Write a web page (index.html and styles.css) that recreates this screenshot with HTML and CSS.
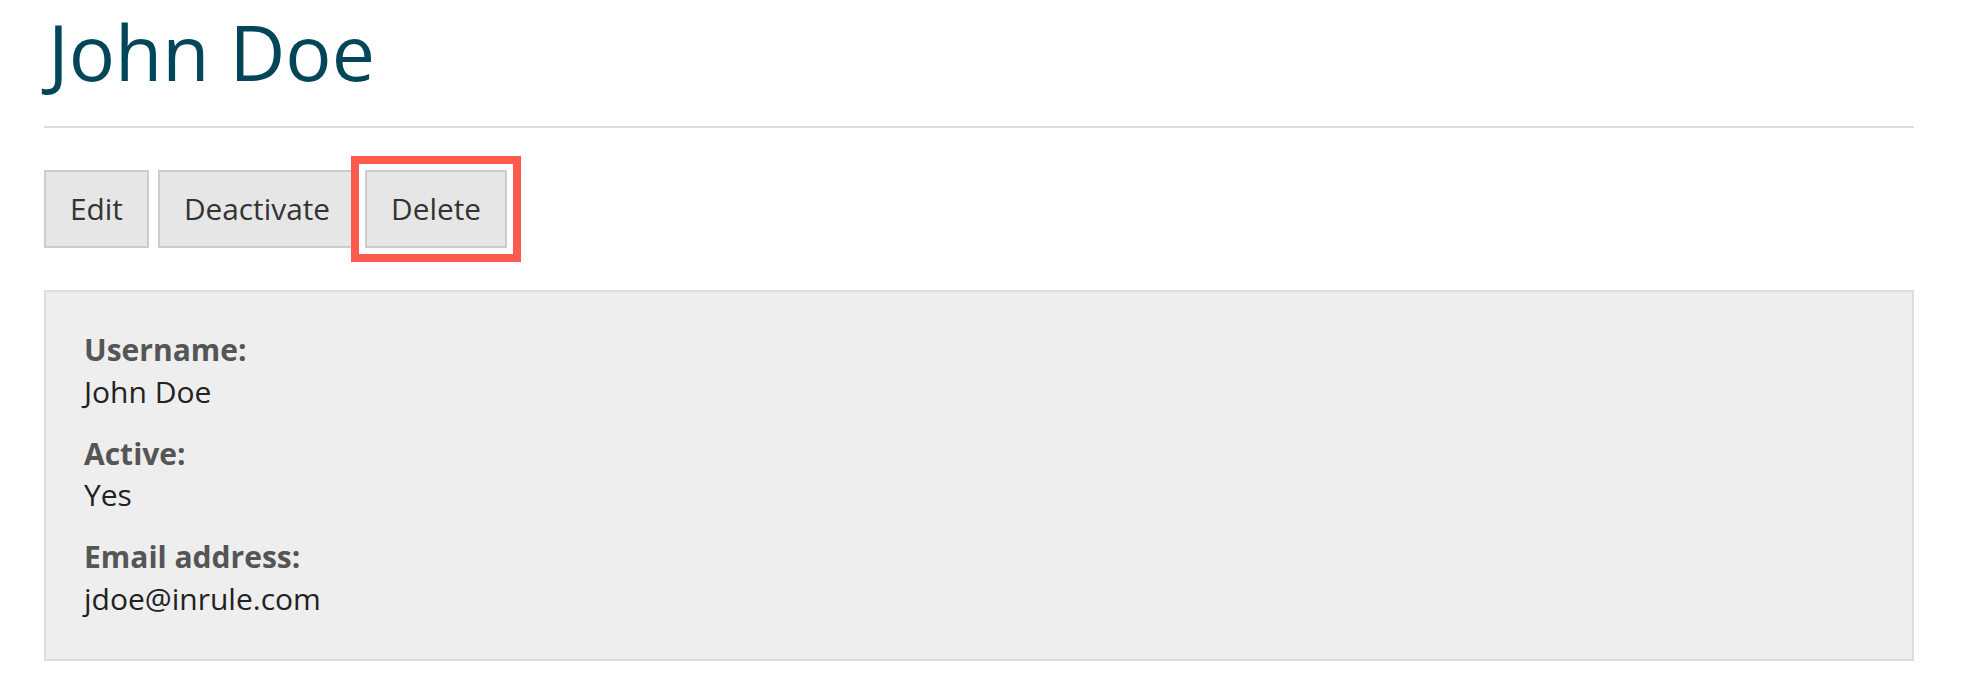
FILE: index.html
```html
<!DOCTYPE html>
<html lang="en">
<head>
<meta charset="utf-8">
<title>John Doe</title>
<link rel="stylesheet" href="styles.css">
</head>
<body>
<div class="page">
  <h1 class="title">John Doe</h1>
  <div class="rule"></div>
  <div class="actions">
    <button class="btn" type="button">Edit</button>
    <button class="btn" type="button">Deactivate</button>
    <button class="btn btn-highlight" type="button">Delete</button>
  </div>
  <dl class="details">
    <div class="field">
      <dt class="label">Username:</dt>
      <dd class="value">John Doe</dd>
    </div>
    <div class="field">
      <dt class="label">Active:</dt>
      <dd class="value">Yes</dd>
    </div>
    <div class="field">
      <dt class="label">Email address:</dt>
      <dd class="value">jdoe@inrule.com</dd>
    </div>
  </dl>
</div>
</body>
</html>
```

FILE: styles.css
```css
html, body {
  margin: 0;
  padding: 0;
  background: #ffffff;
}

body {
  font-family: "Open Sans", "Liberation Sans", sans-serif;
  color: #222222;
}

.page {
  padding: 8px 58px 0 44px;
}

.title {
  margin: 0;
  padding-left: 4px;
  font-size: 77px;
  line-height: 87px;
  font-weight: 400;
  color: #044659;
}

.rule {
  margin-top: 31px;
  border-top: 2px solid #dcdcdc;
}

.actions {
  display: flex;
  gap: 9px;
  margin-top: 42px;
}

.btn {
  font-family: inherit;
  font-size: 29.8px;
  line-height: 42px;
  padding: 16px 24px;
  border: 2px solid #cccccc;
  background: #e6e6e6;
  color: #333333;
  border-radius: 0;
  margin: 0;
}

.btn-highlight {
  outline: 8px solid #fe5a4d;
  outline-offset: 6px;
}

.details {
  margin: 42px 0 0 0;
  padding: 37px 38px 39px 38px;
  background: #eeeeee;
  border: 2px solid #dddddd;
  font-size: 30px;
  line-height: 41.6px;
}

.field + .field {
  margin-top: 20.5px;
}

.label {
  font-weight: 700;
  color: #555555;
}

.value {
  margin: 0;
  color: #222222;
}
```
